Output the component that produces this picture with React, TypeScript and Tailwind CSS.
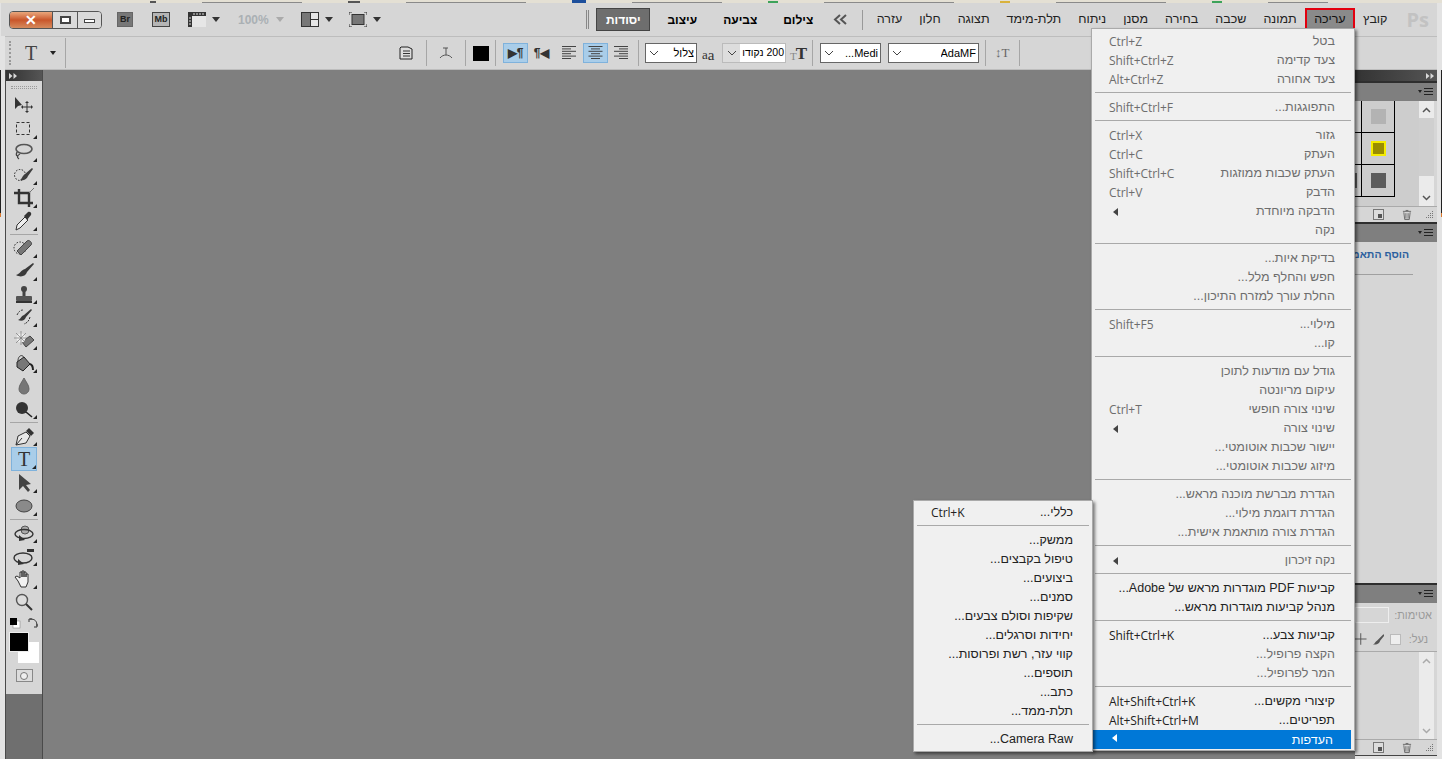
import { ReactNode } from "react";

const uiFont = "font-['Liberation_Sans','Open_Sans',sans-serif]";

type Item = { t: string; k?: string; on?: boolean; sub?: boolean; sep?: boolean };

const editMenu: Item[] = [
  { t: "בטל", k: "Ctrl+Z" },
  { t: "צעד קדימה", k: "Shift+Ctrl+Z" },
  { t: "צעד אחורה", k: "Alt+Ctrl+Z", sep: true },
  { t: "התפוגגות...", k: "Shift+Ctrl+F", sep: true },
  { t: "גזור", k: "Ctrl+X" },
  { t: "העתק", k: "Ctrl+C" },
  { t: "העתק שכבות ממוזגות", k: "Shift+Ctrl+C" },
  { t: "הדבק", k: "Ctrl+V" },
  { t: "הדבקה מיוחדת", sub: true },
  { t: "נקה", sep: true },
  { t: "בדיקת איות..." },
  { t: "חפש והחלף מלל..." },
  { t: "החלת עורך למזרח התיכון...", sep: true },
  { t: "מילוי...", k: "Shift+F5" },
  { t: "קו...", sep: true },
  { t: "גודל עם מודעות לתוכן" },
  { t: "עיקום מריונטה" },
  { t: "שינוי צורה חופשי", k: "Ctrl+T" },
  { t: "שינוי צורה", sub: true },
  { t: "יישור שכבות אוטומטי..." },
  { t: "מיזוג שכבות אוטומטי...", sep: true },
  { t: "הגדרת מברשת מוכנה מראש..." },
  { t: "הגדרת דוגמת מילוי..." },
  { t: "הגדרת צורה מותאמת אישית...", sep: true },
  { t: "נקה זיכרון", sub: true, sep: true },
  { t: "קביעות PDF מוגדרות מראש של Adobe...", on: true },
  { t: "מנהל קביעות מוגדרות מראש...", on: true, sep: true },
  { t: "קביעות צבע...", k: "Shift+Ctrl+K", on: true },
  { t: "הקצה פרופיל..." },
  { t: "המר לפרופיל...", sep: true },
  { t: "קיצורי מקשים...", k: "Alt+Shift+Ctrl+K", on: true },
  { t: "תפריטים...", k: "Alt+Shift+Ctrl+M", on: true },
];

const prefsMenu: Item[] = [
  { t: "כללי...", k: "Ctrl+K", on: true, sep: true },
  { t: "ממשק...", on: true },
  { t: "טיפול בקבצים...", on: true },
  { t: "ביצועים...", on: true },
  { t: "סמנים...", on: true },
  { t: "שקיפות וסולם צבעים...", on: true },
  { t: "יחידות וסרגלים...", on: true },
  { t: "קווי עזר, רשת ופרוסות...", on: true },
  { t: "תוספים...", on: true },
  { t: "כתב...", on: true },
  { t: "תלת-ממד...", on: true, sep: true },
  { t: "Camera Raw...", on: true },
];

const topMenu = ["קובץ", "עריכה", "תמונה", "שכבה", "בחירה", "מסנן", "ניתוח", "תלת-מימד", "תצוגה", "חלון", "עזרה"];

const Arrow = ({ white }: { white?: boolean }) => (
  <span className={`block w-0 h-0 border-y-[4px] border-y-transparent border-r-[5px] ${white ? "border-r-white" : "border-r-[#444]"}`} />
);

const Row = ({ item }: { item: Item }) => (
  <>
    <div dir="rtl" className={`flex items-center justify-between h-[19px] pr-[19px] pl-[17px] text-[12.5px] ${item.on ? "text-[#222]" : "text-[#6d6d6d]"}`}>
      <span>{item.t}</span>
      {item.k && <span dir="ltr" className="font-['Open_Sans',sans-serif] text-[12px] tracking-[-0.1px]">{item.k}</span>}
      {item.sub && <span className="ml-[4px]"><Arrow /></span>}
    </div>
    {item.sep && <div className="h-px mx-[3px] mt-[3px] mb-[5px] bg-[#a9a9a9]" />}
  </>
);

const Tool = ({ children, active, corner = true, h = 23 }: { children: ReactNode; active?: boolean; corner?: boolean; h?: number }) => (
  <div style={{ height: h }} className={`relative mx-auto w-[26px] flex items-center justify-center ${active ? "bg-[#a9cde9] border border-[#7fb2dc]" : ""}`}>
    <svg width="22" height="20" viewBox="0 0 22 20">{children}</svg>
    {corner && (
      <svg className="absolute right-[0px] bottom-[1px]" width="4" height="4" viewBox="0 0 4 4"><path d="M4 0V4H0Z" fill="#222" /></svg>
    )}
  </div>
);

const ToolSep = () => <div className="h-px mx-[4px] my-[1.5px] bg-[#a6a6a6]" />;

const DoubleArrow = () => (
  <svg width="8" height="6" viewBox="0 0 8 6"><path d="M0 0L3.5 3L0 6ZM4.5 0L8 3L4.5 6Z" fill="#d8d8d8" /></svg>
);

const LeftTools = () => (
  <div className="w-[38px] shrink-0 flex flex-col bg-[#d6d6d6] border-x border-[#4a4a4a]">
    <div className="h-[11px] bg-gradient-to-r from-[#333] to-[#555] flex items-center pl-[3px]"><DoubleArrow /></div>
    <div className="h-[3px] mx-[5px] mt-[5px] mb-[5px] border-y border-dotted border-[#9a9a9a]" />
    <Tool corner={false}>
      <path d="M2 1V13L5 10L9 9Z" fill="#333" />
      <path d="M14 6V16M9 11H19" stroke="#333" fill="none" />
      <path d="M14 5l-2 2h4zM14 17l-2-2h4zM8 11l2-2v4zM20 11l-2-2v4z" fill="#333" />
    </Tool>
    <Tool>
      <rect x="3.5" y="3.5" width="13" height="12" fill="none" stroke="#333" strokeDasharray="3 2" />
    </Tool>
    <Tool>
      <ellipse cx="11" cy="7" rx="8" ry="4.5" fill="none" stroke="#555" strokeWidth="1.6" />
      <path d="M4 10c-1 2-1 3 0 4M7 12c-2 1-4 3-1 5" fill="none" stroke="#444" strokeWidth="1.3" />
    </Tool>
    <Tool>
      <circle cx="7" cy="10" r="5.5" fill="none" stroke="#222" strokeDasharray="1.5 1.5" />
      <path d="M19 3L12 9C9 11 9 14 7 15C11 16 14 14 15 11L20 4Z" fill="#3f3f3f" />
    </Tool>
    <Tool>
      <path d="M6 1V15H20M1 5H16V19" fill="none" stroke="#333" strokeWidth="2.4" />
      <path d="M16 5L21 0" stroke="#777" />
    </Tool>
    <Tool>
      <path d="M3 19L4 14L12 6L15 9L7 17Z" fill="#eee" stroke="#333" />
      <path d="M11 5L15 1C17 0 19 2 18 4L14 9Z" fill="#333" />
    </Tool>
    <ToolSep />
    <Tool>
      <circle cx="7" cy="10" r="6" fill="none" stroke="#222" strokeDasharray="1.5 1.5" />
      <path d="M7 16L4 13L14 3C16 1 20 5 18 7L8 17Z" fill="#777" stroke="#444" />
    </Tool>
    <Tool>
      <path d="M20 2L12 8C8 9 7 13 3 14C8 17 13 15 14 11L21 3Z" fill="#3a3a3a" />
    </Tool>
    <Tool>
      <circle cx="11" cy="5" r="3" fill="#444" />
      <rect x="9.5" y="7" width="3" height="6" fill="#444" />
      <rect x="3" y="12" width="16" height="5" rx="1" fill="#555" />
      <rect x="3" y="17" width="16" height="2" fill="#333" />
    </Tool>
    <Tool>
      <path d="M18 2L11 8C8 9 8 12 5 13C9 15 12 13 13 10L19 3Z" fill="#3a3a3a" />
      <path d="M4 8C6 4 8 3 10 3M17 10C16 14 14 16 11 17" fill="none" stroke="#333" strokeDasharray="2 1" />
    </Tool>
    <Tool>
      <path d="M9 12L17 6L21 10L13 17Z" fill="#777" stroke="#444" />
      <circle cx="8" cy="8" r="4.5" fill="#eee" />
      <path d="M8 1V15M1 8H15M3 3L13 13M13 3L3 13" stroke="#777" strokeWidth=".7" />
    </Tool>
    <Tool>
      <path d="M4 9L11 4L17 11L10 18L4 14Z" fill="#777" stroke="#222" />
      <path d="M5 8C5 2 10 1 11 5" fill="none" stroke="#333" />
      <path d="M17 11C20 12 20 15 20 17" fill="none" stroke="#222" strokeWidth="2" />
    </Tool>
    <Tool corner={false}>
      <path d="M11 2C9 6 6 9 6 13A5 5 0 0 0 16 13C16 9 13 6 11 2Z" fill="#777" stroke="#666" />
    </Tool>
    <Tool>
      <circle cx="9" cy="9" r="6" fill="#333" />
      <path d="M13 13L19 18" stroke="#222" strokeWidth="1.6" />
    </Tool>
    <ToolSep />
    <Tool>
      <path d="M3 19L5 10L13 6L17 10L13 17Z" fill="#e8e8e8" stroke="#333" />
      <path d="M3 19L9 12" stroke="#333" />
      <path d="M13 5L16 2L21 7L18 10Z" fill="#333" />
    </Tool>
    <Tool active h={24}>
      <text x="11" y="17" textAnchor="middle" className="font-['Liberation_Serif',serif] text-[20px]" fill="#333">T</text>
    </Tool>
    <Tool>
      <path d="M6 1V17L10 13L15 19L17 17L13 12L18 11Z" fill="#444" />
    </Tool>
    <Tool>
      <ellipse cx="11" cy="10" rx="8" ry="6" fill="#8a8a8a" stroke="#444" />
    </Tool>
    <ToolSep />
    <Tool>
      <circle cx="12" cy="7" r="4" fill="#aaa" stroke="#555" />
      <ellipse cx="11" cy="11" rx="9" ry="4.5" fill="none" stroke="#333" strokeWidth="1.4" />
      <path d="M6 12L12 17L6 18Z" fill="#333" />
    </Tool>
    <Tool>
      <ellipse cx="10" cy="12" rx="9" ry="5" fill="none" stroke="#333" strokeWidth="1.4" />
      <rect x="14" y="3" width="7" height="3" fill="#333" />
      <path d="M5 13L11 18L5 19Z" fill="#333" />
    </Tool>
    <Tool>
      <path d="M5 12L2 8L4 7L7 9V3H9V8V2H11V8V3H13V8V5H15V13L13 18H8Z" fill="#f1f1f1" stroke="#333" />
    </Tool>
    <Tool corner={false}>
      <circle cx="9" cy="8" r="5.5" fill="#ddd" stroke="#555" strokeWidth="1.4" />
      <path d="M13 12L19 18" stroke="#333" strokeWidth="2" />
    </Tool>
    <div className="flex items-center justify-between px-[3px] h-[19px]">
      <svg width="12" height="12" viewBox="0 0 12 12">
        <rect x="4" y="4" width="7" height="7" fill="#fff" stroke="#777" strokeWidth=".5" />
        <rect x="1" y="1" width="7" height="7" fill="#000" />
      </svg>
      <svg width="12" height="12" viewBox="0 0 12 12">
        <path d="M2 5V2H5M10 7V10H7M3 2C8 2 10 4 10 9" fill="none" stroke="#333" />
      </svg>
    </div>
    <div className="relative h-[32px]">
      <div className="absolute left-[12px] top-[10px] w-[21px] h-[21px] bg-white" />
      <div className="absolute left-[3px] top-[0px] w-[20px] h-[20px] bg-black border border-[#ececec]" />
    </div>
    <div className="mx-auto mt-[5px] w-[17px] h-[13px] border border-[#888] bg-[#dcdcdc] flex items-center justify-center">
      <span className="block w-[8px] h-[8px] rounded-full border border-[#777] bg-[#eee]" />
    </div>
    <div className="flex-1" />
    <div className="h-[65px] bg-[#6f6f6f]" />
  </div>
);

const PanelHead = () => (
  <div className="h-[20px] flex items-center justify-end pr-[4px] bg-[#7f7f7f] border-t-2 border-[#2e2e2e]">
    <svg width="15" height="10" viewBox="0 0 15 10">
      <path d="M0 3H4L2 6Z" fill="#222" />
      <path d="M6 1.5H15M6 4.5H15M6 7.5H15" stroke="#222" />
    </svg>
  </div>
);

const Scroll = ({ thumb }: { thumb?: boolean }) => (
  <div className="w-[15px] bg-[#ebebeb] flex flex-col items-center">
    <div className="h-[17px] shrink-0 flex items-center">
      <svg width="9" height="6" viewBox="0 0 9 6"><path d="M1 5L4.5 1.5L8 5" fill="none" stroke={thumb ? "#555" : "#aaa"} strokeWidth="1.5" /></svg>
    </div>
    {thumb && <div className="w-full h-[58px] shrink-0 bg-[#cfcfcf]" />}
    <div className="flex-1" />
    <div className="h-[17px] shrink-0 flex items-center">
      <svg width="9" height="6" viewBox="0 0 9 6"><path d="M1 1L4.5 4.5L8 1" fill="none" stroke={thumb ? "#555" : "#aaa"} strokeWidth="1.5" /></svg>
    </div>
  </div>
);

const PanelFoot = () => (
  <div className="h-[16px] shrink-0 flex items-center justify-end pr-[3px] border-t border-[#aaa]">
    <svg width="11" height="11" viewBox="0 0 11 11"><rect x=".5" y=".5" width="10" height="10" fill="#ddd" stroke="#777" /><rect x="5" y="5" width="4" height="4" fill="#555" /></svg>
    <svg className="ml-[18px]" width="10" height="12" viewBox="0 0 11 12"><path d="M1 2H10M2 3L3 11H8L9 3M4 1H7" fill="none" stroke="#666" /><path d="M4 4V10M5.5 4V10M7 4V10" stroke="#888" /></svg>
    <svg className="ml-[13px]" width="9" height="7" viewBox="0 0 9 7"><path d="M8 0V1H7V0ZM6 2V3H5V2ZM8 2V3H7V2ZM4 4V5H3V4ZM6 4V5H5V4ZM8 4V5H7V4ZM2 6V7H1V6ZM4 6V7H3V6ZM6 6V7H5V6ZM8 6V7H7V6Z" fill="#777" /></svg>
  </div>
);

const Swatch = ({ c, yellow, stub }: { c: string; yellow?: boolean; stub?: boolean }) => (
  <div className="w-[40px] h-[32px] flex border-r border-b border-black">
    <div className="w-[7px] shrink-0 border-r border-black flex items-center">
      {stub && <span className="block w-[2px] h-[15px] bg-[#5c5c5c]" />}
    </div>
    <div className="flex-1 flex items-center justify-center">
      <span className={`w-[15px] h-[15px] block ${yellow ? "border-2 border-[#f5ec00]" : ""}`} style={{ background: c }} />
    </div>
  </div>
);

const RightPanels = () => (
  <div className="w-[82px] shrink-0 flex flex-col bg-[#d6d6d6] ml-auto">
    <div className="h-[11px] bg-gradient-to-r from-[#333] to-[#555] flex items-center justify-end pr-[3px]"><DoubleArrow /></div>
    <PanelHead />
    <div className="h-[105px] flex bg-[#cdcdcd]">
      <div className="flex-1 flex flex-col items-start">
        <Swatch c="#b3b3b3" />
        <Swatch c="#9a8d00" yellow />
        <Swatch c="#5c5c5c" stub />
      </div>
      <Scroll thumb />
      <div className="w-[3px] bg-[#d6d6d6]" />
    </div>
    <PanelFoot />
    <PanelHead />
    <div className="h-[341px] shrink-0">
      <div dir="rtl" className="pr-[28px] mt-[5px] whitespace-nowrap text-[10.5px] font-bold text-[#2c5f9e]">הוסף התאמה</div>
      <div className="h-px bg-[#a0a0a0] mr-[24px] mt-[11px]" />
    </div>
    <PanelHead />
    <div dir="rtl" className="h-[24px] shrink-0 flex items-center pr-[5px] gap-[5px] text-[11px] text-[#9a9a9a]">
      <span>אטימות:</span>
      <span className="block w-[39px] h-[16px] border border-[#eee]" />
    </div>
    <div dir="rtl" className="h-[25px] shrink-0 flex items-center pr-[9px] border-b border-[#aaa] text-[11px] text-[#9a9a9a]">
      <span>נעל:</span>
      <span className="block ml-0 mr-[8px] w-[11px] h-[11px] bg-[#eee] border border-[#bbb]" />
      <svg className="mr-[6px]" width="13" height="13" viewBox="0 0 12 12"><path d="M11 1L5 7C3 8 3 10 1 11C5 11 7 10 8 7L12 2Z" fill="#555" /></svg>
      <svg className="mr-[5px]" width="12" height="12" viewBox="0 0 12 12"><path d="M6 0V12M0 6H12" stroke="#555" /></svg>
    </div>
    <div className="flex-1 min-h-0 flex justify-end pr-[3px]">
      <Scroll />
    </div>
    <PanelFoot />
    <div className="h-[4px] shrink-0 bg-[#e3e3e3] border-t border-[#444]" />
  </div>
);

const Chevron = () => (
  <svg width="10" height="6" viewBox="0 0 10 6"><path d="M1 1L5 5L9 1" fill="none" stroke="#444" /></svg>
);

const Combo = ({ w, text }: { w: string; text: string }) => (
  <div className={`${w} h-[20px] flex items-center justify-between bg-white border border-[#666] text-[11px] pl-[3px] pr-[2px] text-black`}>
    <Chevron />
    <span dir="rtl" className="truncate">{text}</span>
  </div>
);

const Vsep = () => <span className="block w-px h-[26px] bg-[#a6a6a6]" />;

const Lines = ({ a }: { a: "l" | "c" | "r" }) => {
  const rows = [14, 9, 14, 9, 14, 9];
  return (
    <svg width="15" height="14" viewBox="0 0 15 14">
      {rows.map((w, i) => {
        const x = a === "l" ? 0 : a === "c" ? (15 - w) / 2 : 15 - w;
        return <rect key={i} x={x} y={i * 2.4} width={w} height="1" fill="#444" />;
      })}
    </svg>
  );
};

const DownTri = ({ c }: { c: string }) => (
  <svg width="8" height="5" viewBox="0 0 8 5"><path d="M0 0H8L4 5Z" fill={c} /></svg>
);

const TitleBar = () => (
  <div className="h-[33px] shrink-0 flex items-center bg-[#d6d6d6] mr-[5px] ml-[1px]">
    {/* window buttons */}
    <div className="ml-[8px] w-[93px] h-[18px] shrink-0 flex rounded-[4px] border border-[#555] overflow-hidden">
      <div className="w-[42px] flex items-center justify-center bg-gradient-to-b from-[#e9a77c] via-[#c9562a] to-[#d58a5c] text-white font-bold text-[14px] leading-none">✕</div>
      <div className="w-[25px] flex items-center justify-center bg-[#d9d9d9] border-l border-[#555]"><span className="block w-[11px] h-[8px] border-2 border-[#444] bg-white" /></div>
      <div className="flex-1 flex items-center justify-center bg-[#d9d9d9] border-l border-[#555]"><span className="block w-[11px] h-[4px] mt-[3px] border border-[#444] bg-white" /></div>
    </div>
    <div className="ml-[15px] w-[16px] h-[15px] shrink-0 bg-[#777] border border-[#666] text-[9px] leading-none flex items-center justify-center text-[#222] font-bold">Br</div>
    <div className="ml-[19px] w-[18px] h-[15px] shrink-0 bg-[#b5b5b5] border border-[#444] text-[9px] leading-none flex items-center justify-center text-[#222] font-bold">Mb</div>
    <svg className="ml-[18px]" width="18" height="15" viewBox="0 0 18 15">
      <rect width="18" height="15" fill="#333" />
      <rect x="4" y="4" width="14" height="11" fill="#e6e6e6" />
      <path d="M6 1V3M9 1V3M12 1V3M15 1V3M1 6H3M1 9H3M1 12H3" stroke="#ddd" />
    </svg>
    <span className="ml-[6px]"><DownTri c="#333" /></span>
    <span className="ml-[18px] w-[29px] text-[12px] font-bold text-[#aab0b4]">100%</span>
    <span className="ml-[9px]"><DownTri c="#aaa" /></span>
    <svg className="ml-[17px]" width="18" height="15" viewBox="0 0 18 15">
      <rect width="18" height="15" fill="#333" />
      <rect x="1" y="1" width="8" height="13" fill="#777" />
      <rect x="10" y="1" width="7" height="6" fill="#e6e6e6" />
      <rect x="10" y="8" width="7" height="6" fill="#e6e6e6" />
    </svg>
    <span className="ml-[6px]"><DownTri c="#333" /></span>
    <svg className="ml-[16px]" width="18" height="15" viewBox="0 0 18 15">
      <path d="M0 3V0H3M15 0H18V3M0 12V15H3M15 15H18V12" fill="none" stroke="#333" />
      <rect x="3" y="2.5" width="12" height="10" fill="#777" stroke="#333" />
    </svg>
    <span className="ml-[6px]"><DownTri c="#333" /></span>

    {/* workspaces */}
    <div className="ml-auto flex items-center">
      <span className="block w-[3px] h-[19px] mr-[7px] border-x border-[#888]" />
      <div className="w-[54px] h-[23px] mr-[3px] flex items-center justify-center bg-[#6e6e6e] border border-[#444] text-white font-bold text-[12px]">יסודות</div>
      <div className="w-[58px] text-center font-bold text-[12px] text-black">עיצוב</div>
      <div className="w-[58px] text-center font-bold text-[12px] text-black">צביעה</div>
      <div className="w-[58px] text-center font-bold text-[12px] text-black">צילום</div>
      <div className="w-[27px] flex justify-center">
        <svg width="15" height="11" viewBox="0 0 15 11"><path d="M7 1L2 5.5L7 10M13 1L8 5.5L13 10" fill="none" stroke="#555" strokeWidth="2" /></svg>
      </div>
      <span className="block w-px h-[20px] ml-[8px] mr-[5px] bg-[#999]" />
    </div>
    <div dir="rtl" className="flex items-center text-[12.5px] text-[#222]">
      <span className="w-[41px] pr-[8px] text-right font-bold text-[20px] leading-none text-[#c2c2c2] font-['Open_Sans',sans-serif]">Ps</span>
      {topMenu.map((m, i) => (
        <span key={m} className={i === 1 ? "h-[20px] px-[7px] mx-[2px] flex items-center bg-[#8a8a8a] outline-2 outline-[#e3000f] text-[#111]" : "h-[20px] px-[8.5px] flex items-center"}>{m}</span>
      ))}
    </div>
  </div>
);

const OptionsBar = () => (
  <div className="h-[34px] shrink-0 flex items-center bg-[#d6d6d6] border-y border-[#bdbdbd] mx-[5px]">
    <span className="w-[4px] h-[24px] ml-[4px] border-l-2 border-dotted border-[#999]" />
    <span className="ml-[12px] w-[14px] font-['Liberation_Serif',serif] text-[20px] leading-none text-[#444]">T</span>
    <span className="ml-[11px]"><svg width="6" height="4" viewBox="0 0 6 4"><path d="M0 0H6L3 4Z" fill="#222" /></svg></span>
    <span className="ml-[9px] block w-px h-[30px] bg-[#a6a6a6]" />
    <svg className="ml-[333px]" width="14" height="14" viewBox="0 0 14 14">
      <path d="M2 1H9L13 3V13H1V2Z" fill="#ddd" stroke="#222" />
      <path d="M4 5H11M4 7.5H11M4 10H11" stroke="#333" />
    </svg>
    <span className="ml-[13px]"><Vsep /></span>
    <svg className="ml-[11px]" width="16" height="16" viewBox="0 0 16 16"><path d="M2 13C5 9 11 9 14 13M5 3H10M8 3V10" fill="none" stroke="#555" /></svg>
    <span className="ml-[11px]"><Vsep /></span>
    <span className="ml-[7px] block w-[16px] h-[15px] bg-black" />
    <span className="ml-[6px]"><Vsep /></span>
    <div className="ml-[7px] w-[25px] h-[20px] flex items-center justify-center bg-[#a9cde9] border border-[#7fb2dc] text-[12px] font-bold text-[#333]">▶¶</div>
    <div className="ml-[1px] w-[25px] h-[20px] flex items-center justify-center text-[12px] font-bold text-[#333]">¶◀</div>
    <div className="ml-[3px] w-[25px] h-[20px] flex items-center justify-center"><Lines a="l" /></div>
    <div className="ml-[1px] w-[25px] h-[20px] flex items-center justify-center bg-[#a9cde9] border border-[#7fb2dc]"><Lines a="c" /></div>
    <div className="w-[25px] h-[20px] flex items-center justify-center"><Lines a="r" /></div>
    <span className="ml-[5px]"><Vsep /></span>
    <div className="ml-[6px]"><Combo w="w-[52px]" text="צלול" /></div>
    <span className="ml-[5px] w-[16px] flex items-end leading-none text-[13px] text-[#333] font-['Liberation_Serif',serif]"><span className="-mt-[2px]">a</span><span className="text-[15px] translate-y-[2px]">a</span></span>
    <div className="ml-[4px] flex h-[20px] w-[64px] bg-[#bbb] border border-[#bbb]">
      <div className="w-[17px] flex items-center justify-center bg-[#ddd]"><Chevron /></div>
      <span dir="rtl" className="flex-1 bg-white text-[10.5px] text-black flex items-center px-[1px] whitespace-nowrap overflow-hidden">200 נקודו</span>
    </div>
    <span className="ml-[4px] w-[15px] flex items-end font-['Liberation_Serif',serif] font-bold leading-none text-[#333]"><span className="text-[11px] font-normal text-[#888] -mr-[1px]">T</span><span className="text-[17px]">T</span></span>
    <span className="ml-[7px]"><Vsep /></span>
    <div className="ml-[7px]"><Combo w="w-[61px]" text="Medi..." /></div>
    <div className="ml-[7px]"><Combo w="w-[91px]" text="AdaMF" /></div>
    <span className="ml-[6px]"><Vsep /></span>
    <span className="ml-[9px] w-[15px] text-[13px] font-['Liberation_Serif',serif] text-[#666]">↕T</span>
    <span className="ml-[9px]"><Vsep /></span>
    <div className="flex-1" />
  </div>
);

export default function App() {
  return (
    <div className={`${uiFont} relative w-[1442px] h-[759px] overflow-hidden bg-[#e3e3e3] flex flex-col`}>
      {/* browser tabs behind the window, only their lower edge shows */}
      <div className="h-[3px] shrink-0 flex items-end gap-[46px] pl-[150px] bg-[#e4e0d4]">
        <span className="block w-[6px] h-[2px] bg-[#555]" />
        <span className="block w-[100px] h-px bg-[#8a8a8a]" />
        <span className="block w-[12px] h-[2px] bg-[#555]" />
        <span className="block w-[120px] h-px bg-[#8a8a8a]" />
        <span className="block w-[14px] h-[3px] bg-[#1d4f9c]" />
        <span className="block w-[90px] h-px bg-[#8a8a8a]" />
        <span className="block w-[10px] h-[2px] bg-[#3da35a]" />
        <span className="block w-[130px] h-px bg-[#8a8a8a]" />
        <span className="block w-[10px] h-[2px] bg-[#d9b23c]" />
        <span className="block w-[110px] h-px bg-[#8a8a8a]" />
        <span className="block w-[10px] h-[2px] bg-[#3da35a]" />
        <span className="block w-[60px] h-px bg-[#8a8a8a]" />
      </div>
      <TitleBar />
      <OptionsBar />
      <div className="flex-1 min-h-0 flex mx-[5px] bg-[#7f7f7f]">
        <LeftTools />
        <RightPanels />
      </div>

      {/* slivers of the desktop past the window edge */}
      <div className="absolute left-0 top-[70px] w-px h-[143px] bg-[#222]" />
      <div className="absolute left-0 top-[213px] w-px h-[4px] bg-[#d9782c]" />
      <div className="absolute right-0 top-[70px] w-px h-[143px] bg-[#222]" />
      <div className="absolute right-0 top-[213px] w-px h-[4px] bg-[#d9782c]" />

      {/* Edit menu */}
      <div className="absolute left-[1091px] top-[28px] w-[264px] bg-[#f0f0f0] border border-[#aaa] shadow-[2px_2px_3px_rgba(0,0,0,0.5)] pt-[3px] pb-[1px]">
        {editMenu.map((m) => <Row key={m.t} item={m} />)}
        <div dir="rtl" className="relative flex items-center h-[19px] pr-[18px] ml-[1px] mr-[3px] text-[12.5px] text-white bg-[#0078d7]">
          <span className="pt-[2px]">העדפות</span>
          <span className="absolute left-[19px] top-[4px]"><Arrow white /></span>
        </div>
      </div>

      {/* Preferences submenu */}
      <div className="absolute left-[913px] top-[500px] w-[180px] bg-[#f0f0f0] border border-[#aaa] shadow-[2px_2px_3px_rgba(0,0,0,0.5)] py-[2px]">
        {prefsMenu.map((m) => <Row key={m.t} item={m} />)}
      </div>
    </div>
  );
}
